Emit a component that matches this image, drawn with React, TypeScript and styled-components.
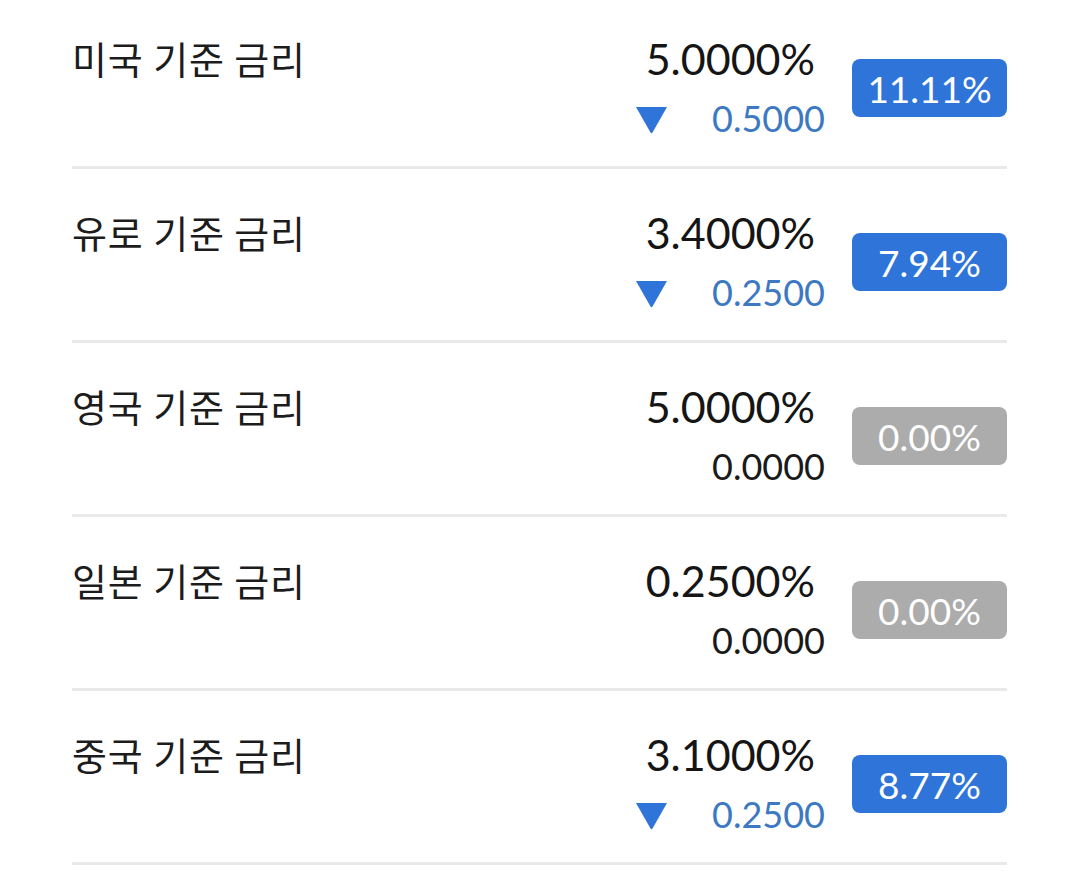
import React from "react";
import styled, { createGlobalStyle } from "styled-components";

const Global = createGlobalStyle`
  html, body { margin: 0; padding: 0; background: #ffffff; }
  body { font-family: Lato, "Noto Sans CJK KR", sans-serif; }
`;

const List = styled.div`
  margin-top: -5px;
  padding: 0 72px;
  width: 935px;
  box-sizing: content-box;
`;

const Row = styled.div`
  height: 171px;
  border-bottom: 3px solid #e9e9e9;
  display: flex;
  align-items: flex-start;
`;

const Label = styled.div`
  flex: 1;
  padding-top: 36px;
  font-family: "Noto Sans CJK KR", sans-serif;
  font-size: 38px;
  line-height: 54px;
  color: #1c1c1c;
  letter-spacing: 0.9px;
`;

const Values = styled.div`
  display: flex;
  flex-direction: column;
  align-items: flex-end;
  padding-top: 38px;
  width: 200px;
`;

const Main = styled.div`
  font-family: Lato, sans-serif;
  font-size: 43px;
  line-height: 52px;
  color: #151515;
  margin-right: 10px;
`;

const ChangeLine = styled.div<{ $tone: "down" | "flat" }>`
  display: flex;
  align-items: center;
  justify-content: flex-end;
  width: 100%;
  margin-top: 11px;
  font-family: Lato, sans-serif;
  font-weight: 400;
  font-size: 36px;
  line-height: 44px;
  color: ${(p) => (p.$tone === "down" ? "#3d78c3" : "#1a1a1a")};
`;

const Arrow = styled.svg`
  width: 33px;
  height: 29px;
  margin-top: 3px;
  margin-right: auto;
  margin-left: 10px;
`;

const Badge = styled.div<{ $tone: "down" | "flat" }>`
  margin-top: 64px;
  margin-left: 27px;
  width: 155px;
  height: 58px;
  border-radius: 8px;
  background: ${(p) => (p.$tone === "down" ? "#2f74d9" : "#acacac")};
  color: #ffffff;
  font-family: Lato, sans-serif;
  font-weight: 400;
  font-size: 37px;
  display: flex;
  align-items: center;
  justify-content: center;
`;

type Item = {
  name: string;
  value: string;
  change: string;
  pct: string;
  tone: "down" | "flat";
};

const items: Item[] = [
  { name: "미국 기준 금리", value: "5.0000%", change: "0.5000", pct: "11.11%", tone: "down" },
  { name: "유로 기준 금리", value: "3.4000%", change: "0.2500", pct: "7.94%", tone: "down" },
  { name: "영국 기준 금리", value: "5.0000%", change: "0.0000", pct: "0.00%", tone: "flat" },
  { name: "일본 기준 금리", value: "0.2500%", change: "0.0000", pct: "0.00%", tone: "flat" },
  { name: "중국 기준 금리", value: "3.1000%", change: "0.2500", pct: "8.77%", tone: "down" },
];

export default function App() {
  return (
    <>
      <Global />
      <List>
        {items.map((it) => (
          <Row key={it.name}>
            <Label>{it.name}</Label>
            <Values>
              <Main>{it.value}</Main>
              <ChangeLine $tone={it.tone}>
                {it.tone === "down" && (
                  <Arrow viewBox="0 0 33 29">
                    <path d="M1 2 L32 2 L17.5 27.5 Q16.5 29 15.5 27.5 Z" fill="#2f74d9" />
                  </Arrow>
                )}
                {it.change}
              </ChangeLine>
            </Values>
            <Badge $tone={it.tone}>{it.pct}</Badge>
          </Row>
        ))}
      </List>
    </>
  );
}
